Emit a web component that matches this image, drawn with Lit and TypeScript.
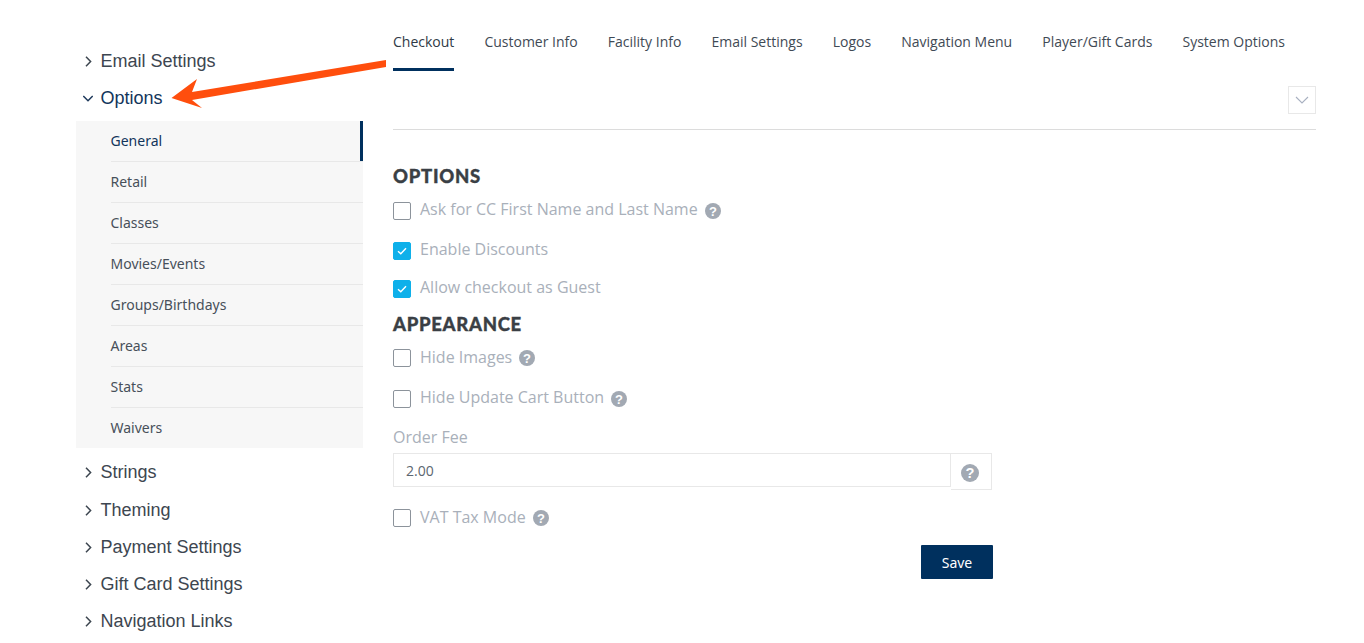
import { LitElement, html, css, svg } from "lit";
import { customElement } from "lit/decorators.js";

const help = () => html`<svg class="help" viewBox="0 0 16 16" aria-hidden="true">
  <circle cx="8" cy="8" r="8" fill="#a2a9b3"></circle>
  <text x="8" y="12.6" text-anchor="middle" font-family="Liberation Sans" font-weight="700" font-size="13" fill="#fff">?</text>
</svg>`;

const chevR = svg`<path d="M1 0.8 L5.6 5.5 L1 10.2" fill="none" stroke="#3d4650" stroke-width="1.5"/>`;
const chevD = svg`<path d="M0.3 1 L5 5.8 L9.7 1" fill="none" stroke="#1f3a5c" stroke-width="1.5"/>`;

@customElement("app-root")
export class AppRoot extends LitElement {
  static styles = css`
    :host { display: block; height: 643px; overflow: hidden; position: relative; background: #fff; font-family: "Open Sans", sans-serif; }
    .page { display: flex; padding: 0 48px 0 76px; gap: 30px; }
    aside { width: 287px; flex: none; padding-top: 43px; }
    .group { display: flex; align-items: center; height: 37px; padding-left: 9px; gap: 6.5px; font: 18px "Liberation Sans", sans-serif; color: #3d4650; }
    .group svg { width: 9px; height: 11px; flex: none; }
    .group.open { color: #12355b; height: 36px; margin-bottom: 5px; padding-left: 7px; gap: 7.5px; }
    .group.open svg { width: 10px; height: 7px; }
    .group.after { height: 37.2px; }
    .sub { list-style: none; margin: 0 0 6.4px; padding: 0; background: #f7f7f7; }
    .sub li { height: 41px; margin-left: 34.5px; padding-bottom: 2px; box-sizing: border-box; display: flex; align-items: center; font-size: 14px; color: #47505a; border-bottom: 1px solid #e8e8e8; font-family: "Noto Sans", sans-serif; }
    .sub li:last-child { border-bottom: none; height: 40px; padding-bottom: 1px; }
    .sub li.active { color: #12355b; position: relative; }
    .sub li.active::after { content: ""; position: absolute; right: 0; top: 0; bottom: 0; width: 3px; background: #00305e; }
    main { flex: 1; min-width: 0; }
    nav { display: flex; gap: 30.08px; height: 71px; }
    nav a { font-size: 14px; color: #3f4a55; padding-top: 32px; box-sizing: border-box; line-height: 20px; }
    nav a.active { border-bottom: 3px solid #00305e; color: #2f3a46; }
    .toolbar { display: flex; justify-content: flex-end; padding-top: 15px; height: 43px; border-bottom: 1px solid #dcdcdc; }
    .toggle { width: 28px; height: 28px; box-sizing: border-box; border: 1px solid #e8e8e8; display: flex; align-items: center; justify-content: center; }
    form { width: 600px; padding-top: 34px; }
    h2 { margin: 0; font: 900 18.5px/24px "Lato", sans-serif; letter-spacing: 0.7px; color: #3a3f45; -webkit-text-stroke: 0.35px #3a3f45; }
    h2.appearance { margin-top: 13px; }
    .check { display: flex; align-items: flex-start; gap: 9px; font-size: 16px; line-height: 22px; height: 22px; color: #a9b0ba; }
    .lift .text { margin-top: -1px; }
    .box { width: 18px; height: 18px; box-sizing: border-box; border: 1px solid #8c939b; border-radius: 2px; flex: none; margin-top: 3px; display: flex; align-items: center; justify-content: center; }
    .box.on { background: #0eb0ea; border-color: #0eb0ea; }
    .help { width: 16px; height: 16px; margin: 4px 0 0 -2px; flex: none; }
    .ask { margin-top: 11px; }
    .enable { margin-top: 18px; }
    .guest { margin-top: 16px; }
    .images { margin-top: 10px; }
    .cart { margin-top: 19px; }
    .label { margin-top: 17px; font-size: 16px; line-height: 22px; color: #a9b0ba; }
    .inputgroup { display: flex; align-items: flex-start; margin: 5px 1px 0 0; }
    .input { flex: 1; height: 34px; box-sizing: border-box; border: 1px solid #e8e8e8; display: flex; align-items: center; padding-left: 12px; font-size: 14px; color: #5c6670; }
    .addon { width: 41px; height: 37px; box-sizing: border-box; border: 1px solid #e8e8e8; border-left: none; display: flex; align-items: center; justify-content: center; padding-right: 2px; }
    .addon .help { margin: 3px 0 0; width: 18px; height: 18px; }
    .vat { margin-top: 16px; }
    .actions { display: flex; justify-content: flex-end; margin-top: 17px; }
    button { width: 72px; height: 34px; border: none; border-radius: 1px; background: #00305e; color: #fff; font: 14px "Noto Sans", sans-serif; padding: 0; }
    .arrow { position: absolute; left: 0; top: 0; pointer-events: none; }
  `;

  private sub = ["General", "Retail", "Classes", "Movies/Events", "Groups/Birthdays", "Areas", "Stats", "Waivers"];
  private tabs = ["Checkout", "Customer Info", "Facility Info", "Email Settings", "Logos", "Navigation Menu", "Player/Gift Cards", "System Options"];
  private after = ["Strings", "Theming", "Payment Settings", "Gift Card Settings", "Navigation Links"];

  private group(t: string) {
    return html`<div class="group after"><svg viewBox="0 0 9 11">${chevR}</svg><span>${t}</span></div>`;
  }

  private box(on = false) {
    return html`<span class="box ${on ? "on" : ""}">${on ? html`<svg width="10" height="8" viewBox="0 0 10 8"><path d="M1 4.2 L3.8 6.8 L9 1.2" fill="none" stroke="#fff" stroke-width="1.4"/></svg>` : ""}</span>`;
  }

  render() {
    return html`
      <div class="page">
        <aside>
          <div class="group"><svg viewBox="0 0 9 11">${chevR}</svg><span>Email Settings</span></div>
          <div class="group open"><svg viewBox="0 0 10 7">${chevD}</svg><span>Options</span></div>
          <ul class="sub">${this.sub.map((s, i) => html`<li class=${i === 0 ? "active" : ""}>${s}</li>`)}</ul>
          ${this.after.map((t) => this.group(t))}
        </aside>
        <main>
          <nav>${this.tabs.map((t, i) => html`<a class=${i === 0 ? "active" : ""}>${t}</a>`)}</nav>
          <div class="toolbar"><div class="toggle"><svg width="14" height="8" viewBox="0 0 14 8"><path d="M1 1 L7 7 L13 1" fill="none" stroke="#a8b0c0" stroke-width="1.1"/></svg></div></div>
          <form>
            <h2>OPTIONS</h2>
            <div class="check ask lift">${this.box()}<span class="text">Ask for CC First Name and Last Name</span>${help()}</div>
            <div class="check enable lift">${this.box(true)}<span class="text">Enable Discounts</span></div>
            <div class="check guest lift">${this.box(true)}<span class="text">Allow checkout as Guest</span></div>
            <h2 class="appearance">APPEARANCE</h2>
            <div class="check images">${this.box()}<span class="text">Hide Images</span>${help()}</div>
            <div class="check cart lift">${this.box()}<span class="text">Hide Update Cart Button</span>${help()}</div>
            <div class="label">Order Fee</div>
            <div class="inputgroup"><div class="input">2.00</div><div class="addon">${help()}</div></div>
            <div class="check vat">${this.box()}<span class="text">VAT Tax Mode</span>${help()}</div>
            <div class="actions"><button type="button">Save</button></div>
          </form>
        </main>
      </div>
      <svg class="arrow" width="420" height="120" viewBox="0 0 420 120" aria-hidden="true">
        <path d="M386 60 L386 67 L192 100 L202 108 L171.5 98 L197 79 L192 92 Z" fill="#ff4e0d"></path>
      </svg>
    `;
  }
}
